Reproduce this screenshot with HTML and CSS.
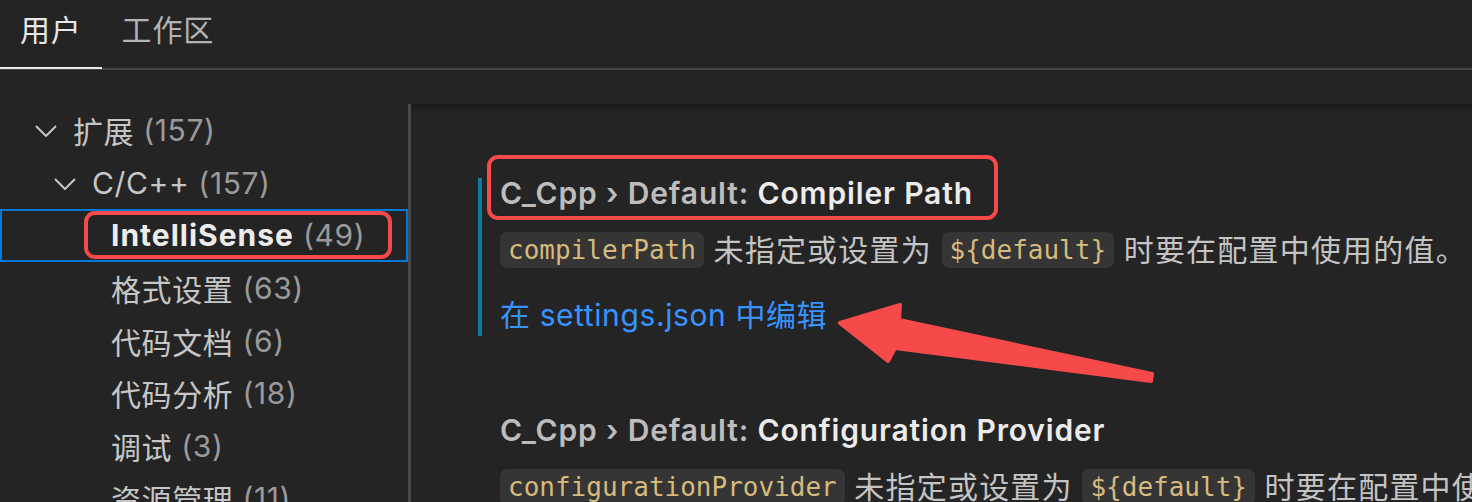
FILE: index.html
```html
<!DOCTYPE html>
<html lang="zh-CN">
<head>
<meta charset="utf-8">
<title>设置</title>
<link rel="stylesheet" href="styles.css">
</head>
<body>
<div class="app">
  <div class="tabs">
    <div class="tab active">用户</div>
    <div class="tab">工作区</div>
  </div>
  <div class="main">
    <nav class="toc">
      <div class="row l0"><span class="twistie"><svg width="22" height="12" viewBox="0 0 22 12"><polyline points="1,1 11,11 21,1"/></svg></span><span class="label">扩展</span><span class="count">(157)</span></div>
      <div class="row l1"><span class="twistie"><svg width="22" height="12" viewBox="0 0 22 12"><polyline points="1,1 11,11 21,1"/></svg></span><span class="label">C/C++</span><span class="count">(157)</span></div>
      <div class="row l2 selected"><span class="twistie"></span><span class="label">IntelliSense</span><span class="count">(49)</span><div class="mark mark-toc"></div></div>
      <div class="row l2"><span class="twistie"></span><span class="label">格式设置</span><span class="count">(63)</span></div>
      <div class="row l2"><span class="twistie"></span><span class="label">代码文档</span><span class="count">(6)</span></div>
      <div class="row l2"><span class="twistie"></span><span class="label">代码分析</span><span class="count">(18)</span></div>
      <div class="row l2"><span class="twistie"></span><span class="label">调试</span><span class="count">(3)</span></div>
      <div class="row l2"><span class="twistie"></span><span class="label">资源管理</span><span class="count">(11)</span></div>
    </nav>
    <div class="sash"></div>
    <div class="pane">
      <div class="setting modified">
        <div class="title"><span class="cat">C_Cpp › Default: </span><span class="name">Compiler Path</span></div>
        <div class="desc"><code class="chip">compilerPath</code> 未指定或设置为 <code class="chip">${default}</code> 时要在配置中使用的值。</div>
        <a class="link">在 settings.json 中编辑</a>
        <div class="mark mark-title"></div>
      </div>
      <div class="setting">
        <div class="title"><span class="cat">C_Cpp › Default: </span><span class="name">Configuration Provider</span></div>
        <div class="desc"><code class="chip">configurationProvider</code> 未指定或设置为 <code class="chip">${default}</code> 时要在配置中使用的值。</div>
      </div>
    </div>
  </div>
  <svg class="arrow" width="1472" height="502" viewBox="0 0 1472 502">
    <polygon points="840,323 900,305 899,320 1152,374 1151,381 895,348 888,361"/>
  </svg>
</div>
</body>
</html>
```

FILE: styles.css
```css
* { box-sizing: border-box; }

html, body {
  margin: 0;
  padding: 0;
  background: #242424;
  overflow: hidden;
}

.app {
  position: relative;
  width: 1472px;
  height: 502px;
  overflow: hidden;
  font-family: "Inter", "Noto Sans CJK SC", sans-serif;
  color: #c4c4c4;
}

/* Tabs */
.tabs {
  display: flex;
  height: 70px;
  border-bottom: 2px solid #474747;
}

.tab {
  padding: 15px 20px 0;
  font-size: 30px;
  line-height: 30px;
  color: #b3b3b3;
  height: 69px;
  letter-spacing: 0.8px;
}

.tab.active {
  color: #e8e8e8;
  border-bottom: 2px solid #e8e8e8;
}

/* Main area */
.main {
  display: flex;
  margin-top: 34px;
  height: 398px;
}

.toc {
  flex: none;
  width: 408px;
}

.row {
  position: relative;
  display: flex;
  align-items: center;
  height: 52.57px;
  font-size: 30px;
  white-space: nowrap;
  color: #c6c6c6;
  letter-spacing: 0.6px;
}

.row.l0 { padding-left: 35px; }
.row.l1 { padding-left: 54px; }
.row.l2 { padding-left: 73px; }

.twistie {
  flex: none;
  width: 38px;
  display: flex;
  align-items: center;
}

.twistie svg {
  display: block;
  margin-top: 2px;
}

.twistie polyline {
  fill: none;
  stroke: #c6c6c6;
  stroke-width: 2;
}

.count {
  color: #9a9a9a;
  margin-left: 9px;
}

.row.selected {
  outline: 2px solid #0078d4;
  outline-offset: -2px;
}

.row.selected .label {
  color: #ececec;
  font-weight: 700;
  letter-spacing: 1px;
}

.sash {
  flex: none;
  width: 3px;
  background: #484848;
}

.pane {
  position: relative;
  flex: 1;
  padding: 74px 0 0 67px;
  overflow: hidden;
  white-space: nowrap;
}

.pane::before {
  content: "";
  position: absolute;
  left: 0;
  top: 0;
  right: 0;
  height: 8px;
  background: linear-gradient(#181818, rgba(24, 24, 24, 0));
}

.setting {
  position: relative;
  border-left: 4px solid transparent;
  padding: 0 0 6px 18px;
  margin-bottom: 79px;
}

.setting.modified {
  border-left-color: #0c7d9d;
}

.title {
  font-size: 30px;
  line-height: 30px;
  font-weight: 600;
  letter-spacing: 0.85px;
}

.cat { color: #bdbdbd; }
.name { color: #ececec; }

.desc {
  margin-top: 23px;
  font-size: 30px;
  line-height: 38px;
  color: #c4c4c4;
  letter-spacing: 1.2px;
}

.chip {
  display: inline-block;
  font-family: "DejaVu Sans Mono", monospace;
  font-size: 26px;
  line-height: 36px;
  letter-spacing: 0;
  padding: 0 8px;
  border-radius: 7px;
  background: #353535;
  color: #d7ba7d;
  vertical-align: top;
  margin-top: 1px;
}

.link {
  display: block;
  width: fit-content;
  margin-top: 31px;
  font-size: 30px;
  line-height: 30px;
  letter-spacing: 0.6px;
  color: #3794ff;
}

/* Annotations */
.mark {
  position: absolute;
  border: 4px solid #f64a4a;
  border-radius: 11px;
  pointer-events: none;
}

.mark-toc {
  left: 84px;
  top: 2px;
  width: 308px;
  height: 48px;
}

.mark-title {
  left: 5px;
  top: -23px;
  width: 511px;
  height: 65px;
}

.arrow {
  position: absolute;
  left: 0;
  top: 0;
  pointer-events: none;
}

.arrow polygon {
  fill: #f64a4a;
  stroke: #f64a4a;
  stroke-width: 4;
  stroke-linejoin: round;
}
```
